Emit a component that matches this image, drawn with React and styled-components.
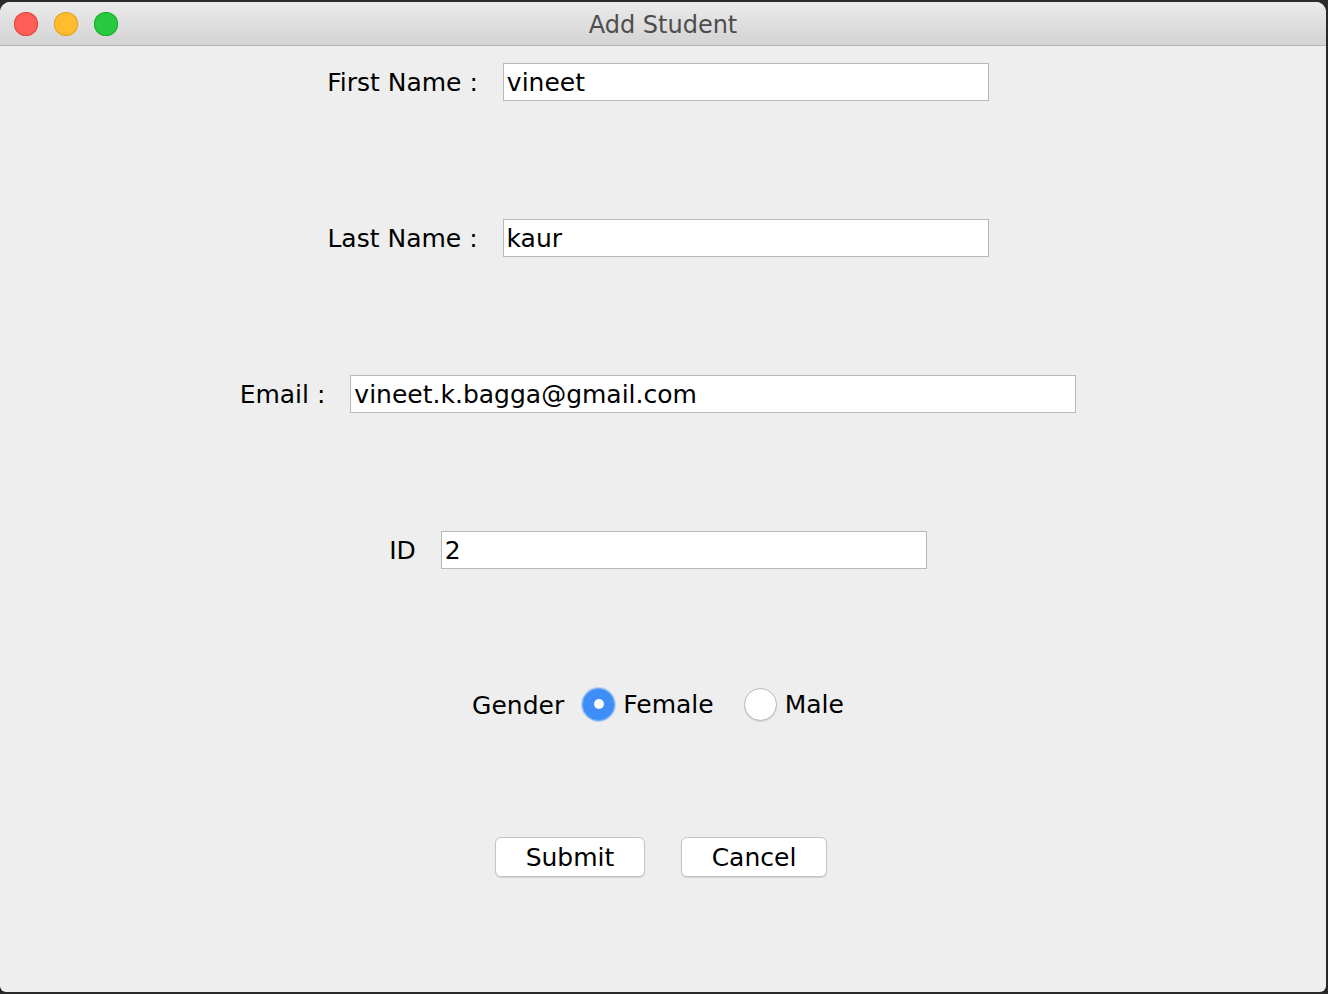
import styled, { createGlobalStyle } from "styled-components";

const GlobalStyle = createGlobalStyle`
  html, body {
    margin: 0;
    padding: 0;
    background: #2b2b2b;
  }
  body {
    font-family: "DejaVu Sans", "Liberation Sans", sans-serif;
  }
`;

const Window = styled.div`
  margin-top: 2px;
  width: 1326px;
  height: 990px;
  background: #eeeeee;
  border-radius: 10px 10px 6px 6px;
  overflow: hidden;
  display: flex;
  flex-direction: column;
  box-shadow: 0 2px 2px rgba(0, 0, 0, 0.35);
`;

const TitleBar = styled.div`
  height: 43px;
  flex-shrink: 0;
  display: flex;
  align-items: center;
  position: relative;
  background: linear-gradient(#ebebeb, #d3d3d3);
  border-bottom: 1px solid #b4b4b4;
`;

const Lights = styled.div`
  display: flex;
  gap: 16px;
  padding-left: 14px;
  padding-top: 1px;
`;

const Light = styled.span`
  width: 24px;
  height: 24px;
  border-radius: 50%;
  background: ${(p) => p.$color};
  box-shadow: inset 0 0 0 1px ${(p) => p.$edge};
`;

const Title = styled.div`
  position: absolute;
  left: 0;
  right: 0;
  top: 9px;
  text-align: center;
  font-size: 24px;
  line-height: 28px;
  color: #4d4d4d;
`;

const Content = styled.div`
  flex: 1;
  display: grid;
  grid-template-rows: repeat(6, 156px);
  padding-right: 10px;
`;

const Row = styled.div`
  display: flex;
  justify-content: center;
  align-items: flex-start;
  padding-top: ${(p) => p.$top}px;
  padding-left: ${(p) => p.$shift || 0}px;
  gap: ${(p) => p.$gap || 25}px;
`;

const Label = styled.span`
  font-size: 25px;
  line-height: 39px;
  color: #000;
  white-space: pre;
`;

const Field = styled.div`
  width: ${(p) => p.$width}px;
  height: 38px;
  box-sizing: border-box;
  background: #fff;
  border: 1px solid #b9b9b9;
  padding-left: 3px;
  font-size: 25px;
  line-height: 38px;
  color: #000;
`;

const RadioGroup = styled.div`
  display: flex;
  align-items: center;
  gap: 30px;
  height: 36px;
`;

const Option = styled.label`
  display: flex;
  align-items: center;
  gap: 8px;
  font-size: 25px;
  color: #000;
`;

const Radio = styled.span`
  width: 33px;
  height: 33px;
  box-sizing: border-box;
  border-radius: 50%;
  display: flex;
  align-items: center;
  justify-content: center;
  background: ${(p) => (p.$checked ? "#3d8ef7" : "#fff")};
  border: 1px solid ${(p) => (p.$checked ? "#6aa9f7" : "#b8b8b8")};
  box-shadow: ${(p) =>
    p.$checked ? "0 0 0 1px rgba(120,170,240,0.45)" : "0 1px 1px rgba(0,0,0,0.1)"};

  &::after {
    content: "";
    display: ${(p) => (p.$checked ? "block" : "none")};
    width: 10px;
    height: 10px;
    border-radius: 50%;
    background: #fff;
  }
`;

const Button = styled.button`
  width: ${(p) => p.$width}px;
  height: 40px;
  background: #fff;
  border: 1px solid #c4c4c4;
  border-radius: 6px;
  box-shadow: 0 1px 1px rgba(0, 0, 0, 0.12);
  font-family: inherit;
  font-size: 25px;
  color: #000;
  padding: 0;
`;

export default function App() {
  return (
    <>
      <GlobalStyle />
      <Window>
        <TitleBar>
          <Lights>
            <Light $color="#fe5f57" $edge="#e0443e" />
            <Light $color="#febc2e" $edge="#dea123" />
            <Light $color="#28c840" $edge="#1aab29" />
          </Lights>
          <Title>Add Student</Title>
        </TitleBar>
        <Content>
          <Row $top={17}>
            <Label>First Name :</Label>
            <Field $width={486}>vineet</Field>
          </Row>
          <Row $top={17}>
            <Label>Last Name :</Label>
            <Field $width={486}>kaur</Field>
          </Row>
          <Row $top={17}>
            <Label>Email :</Label>
            <Field $width={726}>vineet.k.bagga@gmail.com</Field>
          </Row>
          <Row $top={17}>
            <Label>ID</Label>
            <Field $width={486}>2</Field>
          </Row>
          <Row $top={16} $gap={18} $shift={-4}>
            <Label>Gender</Label>
            <RadioGroup>
              <Option>
                <Radio $checked />
                Female
              </Option>
              <Option>
                <Radio />
                Male
              </Option>
            </RadioGroup>
          </Row>
          <Row $top={11} $gap={36} $shift={6}>
            <Button $width={150}>Submit</Button>
            <Button $width={146}>Cancel</Button>
          </Row>
        </Content>
      </Window>
    </>
  );
}
